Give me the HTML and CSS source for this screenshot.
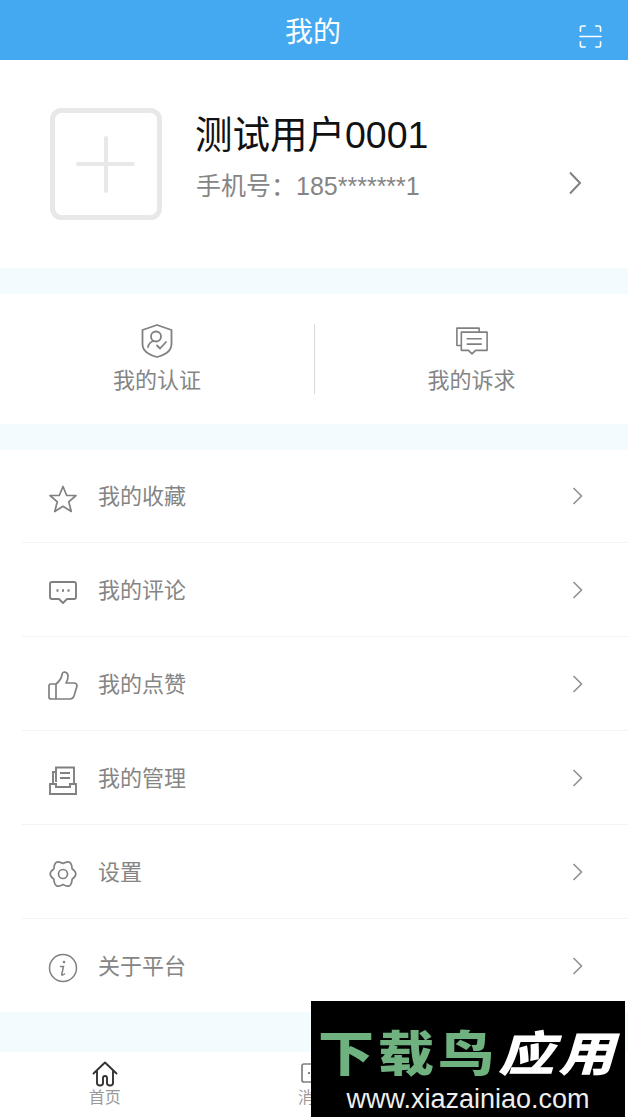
FILE: index.html
```html
<!DOCTYPE html>
<html lang="zh-CN">
<head>
<meta charset="utf-8">
<title>我的</title>
<link rel="stylesheet" href="styles.css">
</head>
<body>
<div class="page">
  <header class="topbar">
    <h1 class="title">我的</h1>
    <svg class="scan" viewBox="0 0 24 24" fill="none" stroke="currentColor" stroke-width="1.700" stroke-linecap="round" stroke-linejoin="round"><path d="M1.500 6.500V3q0-2 2-2h3M17.500 1h3q2 0 2 2v3.500M1 12h22M1.500 17.500V21q0 2 2 2h3M17.500 23h3q2 0 2-2v-3.500"/></svg>
  </header>
  <section class="profile">
    <div class="avatar"><svg viewBox="0 0 112 112" fill="none" stroke="#e8e8e8" stroke-width="4" stroke-linecap="round"><rect x="2.500" y="2.500" width="107" height="107" rx="9" stroke-width="5"/><path d="M56 30v53M28 56h55"/></svg></div>
    <div class="who">
      <div class="name">测试用户0001</div>
      <div class="phone">手机号：185*******1</div>
    </div>
    <svg class="chev-big" viewBox="0 0 14 24" fill="none" stroke="#808080" stroke-width="2"><path d="M2 1.500 12 12 2 22.500"/></svg>
  </section>
  <section class="actions">
    <div class="action">
      <svg class="action-icon" viewBox="0 0 32 34" fill="none" stroke="#808080" stroke-width="1.800" stroke-linecap="round" stroke-linejoin="round"><path d="M16 1 30.500 6v14c0 7-7 11-14.500 13C8.500 31 1.500 27 1.500 20V6z"/><circle cx="15" cy="12.500" r="5"/><path d="M12.500 17C9 18 7.500 20.500 7 23M16 21.500l3 3 6-6.500"/></svg>
      <span>我的认证</span>
    </div>
    <div class="action action-right">
      <svg class="action-icon" viewBox="0 0 36 32" fill="none" stroke="#808080" stroke-width="1.800" stroke-linejoin="round"><path d="M6 21H1V1.500h25V6"/><path d="M6 6h29v20.500H22l-4 4-4-4H6zM12 13.500h17M12 19.500h17"/></svg>
      <span>我的诉求</span>
    </div>
  </section>
  <ul class="menu">
    <li class="row"><svg class="row-icon" viewBox="0 0 30 30" fill="none" stroke="#808080" stroke-width="1.700" stroke-linejoin="round"><path d="M15 2.500l3.700 9h9.300l-7.300 6.300 2.600 9.700-8.300-5.200-8.300 5.200 2.600-9.700L2 11.500h9.300z"/></svg><span class="label">我的收藏</span><svg class="chev" viewBox="0 0 11 18" fill="none" stroke="#909090" stroke-width="1.600"><path d="M1.500 1 9.500 9l-8 8"/></svg></li>
    <li class="row"><svg class="row-icon" viewBox="0 0 30 30" fill="none" stroke="#808080" stroke-width="1.900" stroke-linejoin="round"><path d="M4 5h22q2 0 2 2v13q0 2-2 2h-7l-4 4-4-4H4q-2 0-2-2V7q0-2 2-2z"/><path d="M8.500 13.500h2M14 13.500h2M19.500 13.500h2" stroke-width="2.400"/></svg><span class="label">我的评论</span><svg class="chev" viewBox="0 0 11 18" fill="none" stroke="#909090" stroke-width="1.600"><path d="M1.500 1 9.500 9l-8 8"/></svg></li>
    <li class="row"><svg class="row-icon" viewBox="0 0 30 30" fill="none" stroke="#808080" stroke-width="1.700" stroke-linejoin="round"><path d="M8 28H3q-2 0-2-2V15q0-2 2-2h5q5-4 6-9 0-3 3-3 3 1 3 4 0 4-2 7h8q3 0 3 3l-3 10q-1 3-4 3H8zM8 13v15"/></svg><span class="label">我的点赞</span><svg class="chev" viewBox="0 0 11 18" fill="none" stroke="#909090" stroke-width="1.600"><path d="M1.500 1 9.500 9l-8 8"/></svg></li>
    <li class="row"><svg class="row-icon" viewBox="0 0 30 30" fill="none" stroke="#808080" stroke-width="1.900"><path d="M2 19h6v3h14v-3h6v10H2zM5 19V7h3M8 17V2.500h18V19M12 8h10M12 13h10"/></svg><span class="label">我的管理</span><svg class="chev" viewBox="0 0 11 18" fill="none" stroke="#909090" stroke-width="1.600"><path d="M1.500 1 9.500 9l-8 8"/></svg></li>
    <li class="row"><svg class="row-icon" viewBox="0 0 30 30" fill="none" stroke="#808080" stroke-width="1.700" stroke-linejoin="round"><path d="M15 4.500Q23.500-.5 24.100 9.750 31.500 15 24.100 20.250 23.500 30.500 15 25.500 6.500 30.500 5.900 20.250-1.500 15 5.900 9.750 6.500-.5 15 4.500z"/><circle cx="15" cy="15" r="4.500"/></svg><span class="label">设置</span><svg class="chev" viewBox="0 0 11 18" fill="none" stroke="#909090" stroke-width="1.600"><path d="M1.500 1 9.500 9l-8 8"/></svg></li>
    <li class="row"><svg class="row-icon" viewBox="0 0 30 30" fill="none" stroke="#808080" stroke-width="1.500"><circle cx="15" cy="15" r="13.500"/><path d="M12.500 13.500h3l-1.800 8q0 1.500 2.800-.5" stroke-linecap="round"/><circle cx="16" cy="9" r="1.300" fill="#808080" stroke="none"/></svg><span class="label">关于平台</span><svg class="chev" viewBox="0 0 11 18" fill="none" stroke="#909090" stroke-width="1.600"><path d="M1.500 1 9.500 9l-8 8"/></svg></li>
  </ul>
  <nav class="tabs">
    <div class="tab">
      <svg class="tab-icon" viewBox="0 0 26 26" fill="none" stroke="#333" stroke-width="1.900" stroke-linejoin="round" stroke-linecap="round"><path d="M1.500 12.500 13 1.500l11.500 11M5 10v12q0 2.500 3 2.500t3-2.500v-5q0-2 2-2t2 2v5q0 2.500 3 2.500t3-2.500V10"/></svg>
      <span>首页</span>
    </div>
    <div class="tab">
      <svg class="tab-icon" viewBox="0 0 26 26" fill="none" stroke="#808080" stroke-width="1.700" stroke-linejoin="round"><path d="M3 3h20q2 0 2 2v14q0 2-2 2H3q-2 0-2-2V5q0-2 2-2z"/><path d="M7 12h2M12 12h2M17 12h2" stroke-width="2.200"/></svg>
      <span>消息</span>
    </div>
    <div class="tab"></div>
  </nav>
  <aside class="watermark">
    <div class="wm-title"><span class="wm-green">下载鸟</span><span class="wm-white">应用</span></div>
    <div class="wm-url">www.xiazainiao.com</div>
  </aside>
</div>
</body>
</html>
```
FILE: styles.css
```css
* { box-sizing: border-box; }
html, body { margin: 0; padding: 0; }
body {
  width: 628px;
  height: 1117px;
  overflow: hidden;
  background: #fff;
  font-family: "Liberation Sans", "Noto Sans CJK SC", sans-serif;
  color: #808080;
}
.page { position: relative; width: 628px; height: 1117px; display: flex; flex-direction: column; background: #f4fbff; }
.topbar { position: relative; height: 60px; background: #45a9f1; display: flex; align-items: center; justify-content: center; flex: none; }
.title { margin: 0; color: #fff; font-size: 28px; font-weight: 400; line-height: 1; position: relative; top: 3px; left: -1px; }
.scan { position: absolute; right: 26px; top: 25px; width: 23px; height: 23px; color: #fff; }
.profile { height: 208px; margin-bottom: 26px; background: #fff; display: flex; align-items: center; padding: 0 46px 0 50px; flex: none; }
.avatar { width: 112px; height: 112px; flex: none; }
.avatar svg { display: block; width: 112px; height: 112px; }
.who { flex: 1; margin: 0 0 14px 34px; }
.name { font-size: 37.500px; line-height: 44px; color: #111; margin-left: -1px; }
.phone { font-size: 25px; line-height: 30px; margin-top: 14px; color: #858585; }
.chev-big { width: 14px; height: 24px; margin-top: 38px; flex: none; }
.actions { height: 130px; margin-bottom: 26px; background: #fff; display: flex; align-items: center; flex: none; }
.action { width: 314px; height: 70px; display: flex; flex-direction: column; align-items: center; justify-content: flex-start; font-size: 22px; line-height: 28px; color: #858585; gap: 9px; }
.action-right { border-left: 1px solid #d9d9d9; }
.action-icon { width: 32px; height: 34px; flex: none; }
.menu { list-style: none; margin: 0 0 40px; padding: 0; background: #fff; height: 562px; flex: none; }
.row { height: 94px; margin: 0 0 0 22px; padding: 0 45px 0 26px; display: flex; align-items: center; border-bottom: 1px solid #f3f3f3; font-size: 22px; color: #858585; }
.row:first-child, .row:last-child { height: 93px; }
.row:last-child { border-bottom: 0; }
.row-icon { width: 30px; height: 30px; flex: none; margin-top: 5px; }
.label { flex: 1; margin-left: 20px; position: relative; top: -2px; }
.chev { width: 11px; height: 18px; flex: none; }
.tabs { flex: 1; background: #fff; display: grid; grid-template-columns: repeat(3, 1fr); }
.tab { display: flex; flex-direction: column; align-items: center; padding-top: 9px; font-size: 16px; line-height: 20px; color: #999; }
.tab-icon { width: 26px; height: 26px; margin-bottom: 1px; }
.watermark { position: absolute; left: 311px; top: 1001px; width: 314px; height: 116px; background: #000; display: flex; flex-direction: column; align-items: center; overflow: hidden; }
.wm-title { font-size: 56px; line-height: 60px; height: 60px; margin-top: 20px; font-weight: 900; font-family: "Noto Sans CJK SC", sans-serif; white-space: nowrap; letter-spacing: 4px; transform: scaleY(.85); }
.wm-green { color: #6fb27f; }
.wm-white { color: #fff; font-style: italic; }
.wm-url { color: #eee; font-size: 27px; line-height: 30px; height: 30px; margin-top: 3px; }
```
